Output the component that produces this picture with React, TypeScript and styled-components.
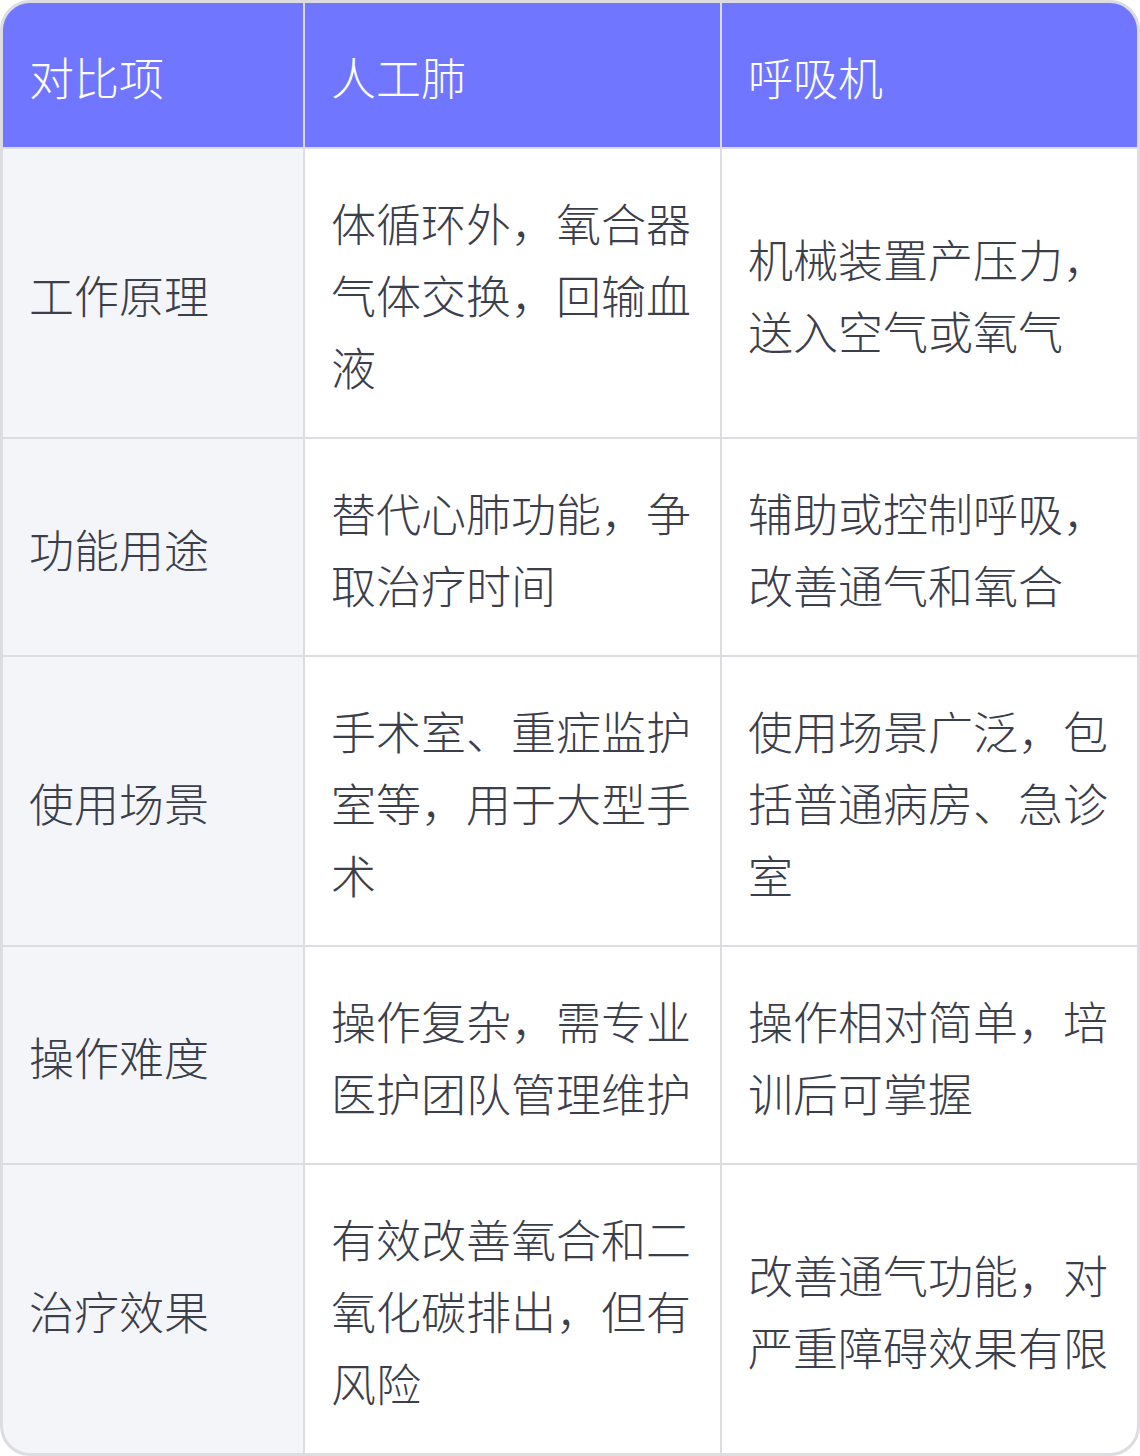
import React from "react";
import styled, { createGlobalStyle } from "styled-components";

const Global = createGlobalStyle`
  html, body { margin: 0; padding: 0; background: #ffffff; }
  body { font-family: "Noto Sans CJK SC", "Noto Sans", sans-serif; }
`;

const Frame = styled.div`
  width: 1140px;
  box-sizing: border-box;
  border: 3px solid #dcdce1;
  border-radius: 30px;
  overflow: hidden;
  background: #dcdce1;
`;

const Grid = styled.div`
  display: grid;
  grid-template-columns: 300px 415px 415px;
  gap: 2px;
`;

const Cell = styled.div<{ $kind: "head" | "label" | "body" }>`
  display: flex;
  align-items: center;
  box-sizing: border-box;
  padding: 38px 24px 34px 26px;
  font-size: 45px;
  line-height: 72px;
  font-weight: 300;
  color: ${(p) => (p.$kind === "head" ? "#ffffff" : "#3b3e4b")};
  background: ${(p) =>
    p.$kind === "head" ? "#7076ff" : p.$kind === "label" ? "#f4f5f9" : "#ffffff"};
`;

const headers = ["对比项", "人工肺", "呼吸机"];

const rows: [string, string, string][] = [
  ["工作原理", "体循环外，氧合器气体交换，回输血液", "机械装置产压力，送入空气或氧气"],
  ["功能用途", "替代心肺功能，争取治疗时间", "辅助或控制呼吸，改善通气和氧合"],
  ["使用场景", "手术室、重症监护室等，用于大型手术", "使用场景广泛，包括普通病房、急诊室"],
  ["操作难度", "操作复杂，需专业医护团队管理维护", "操作相对简单，培训后可掌握"],
  ["治疗效果", "有效改善氧合和二氧化碳排出，但有风险", "改善通气功能，对严重障碍效果有限"],
];

export default function App() {
  return (
    <>
      <Global />
      <Frame>
        <Grid>
          {headers.map((h) => (
            <Cell key={h} $kind="head">
              {h}
            </Cell>
          ))}
          {rows.map((r) => (
            <React.Fragment key={r[0]}>
              <Cell $kind="label">{r[0]}</Cell>
              <Cell $kind="body">{r[1]}</Cell>
              <Cell $kind="body">{r[2]}</Cell>
            </React.Fragment>
          ))}
        </Grid>
      </Frame>
    </>
  );
}
